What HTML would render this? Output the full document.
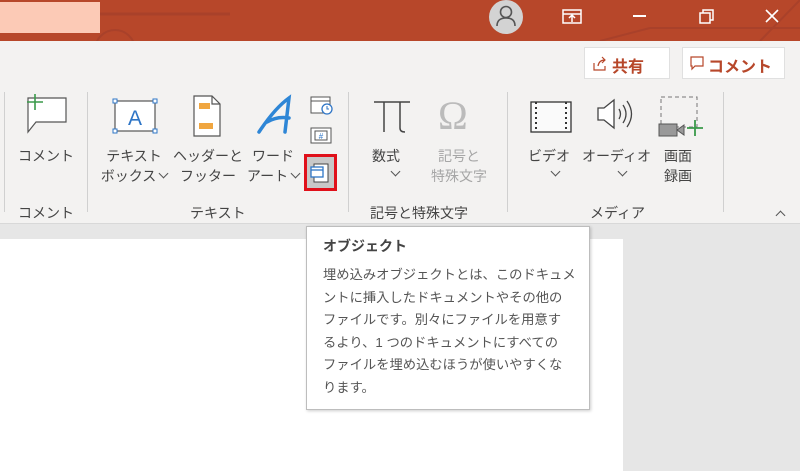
<!DOCTYPE html>
<html><head><meta charset="utf-8"><style>
*{margin:0;padding:0;box-sizing:border-box}
body{width:800px;height:471px;overflow:hidden;background:#e6e6e6;position:relative;font-family:"Liberation Sans","Noto Sans CJK JP",sans-serif;color:#444}
.a{position:absolute}
.t{font-size:14px;color:#444;white-space:nowrap;line-height:20px;text-align:center}
.sep{position:absolute;top:92px;width:1px;height:120px;background:#d0d0d0}
.cv{display:inline-block;width:7px;height:7px;border-right:1.2px solid #555;border-bottom:1.2px solid #555;transform:rotate(45deg);margin:0 0 4px 4px}
</style></head><body>
<div class="a" style="left:0;top:0;width:800px;height:41px;background:#b7472a;overflow:hidden">
<svg width="800" height="41" class="a" style="left:0;top:0">
<line x1="70" y1="14" x2="230" y2="14" stroke="#a9412a" stroke-width="3"/>
<circle cx="115" cy="50" r="20" fill="none" stroke="#a9412a" stroke-width="2"/>
<line x1="600" y1="41" x2="650" y2="28" stroke="#a9412a" stroke-width="2"/>
<line x1="650" y1="28" x2="800" y2="28" stroke="#a9412a" stroke-width="2"/>
<line x1="760" y1="41" x2="800" y2="0" stroke="#a9412a" stroke-width="2"/>
</svg>
<div class="a" style="left:0;top:2px;width:100px;height:31px;background:#fccab6"></div>
<div class="a" style="left:489px;top:0;width:34px;height:34px;border-radius:50%;background:#d3d3d3"></div>
<svg class="a" style="left:489px;top:0" width="34" height="34"><circle cx="17" cy="12" r="5.5" fill="none" stroke="#555" stroke-width="1.6"/><path d="M8 26 Q8 18 17 18 Q26 18 26 26" fill="none" stroke="#555" stroke-width="1.6"/></svg>
<svg class="a" style="left:560px;top:6px" width="24" height="20"><rect x="3" y="4" width="18" height="13" fill="none" stroke="#fff" stroke-width="1.5"/><line x1="3" y1="8" x2="21" y2="8" stroke="#fff" stroke-width="1.5"/><path d="M12 16V10M9 12l3-3 3 3" stroke="#fff" stroke-width="1.5" fill="none"/></svg>
<div class="a" style="left:633px;top:15px;width:13px;height:2px;background:#fff"></div>
<svg class="a" style="left:696px;top:6px" width="20" height="20"><rect x="4" y="7" width="10" height="10" fill="none" stroke="#fff" stroke-width="1.5"/><path d="M7 7V4h10v10h-3" fill="none" stroke="#fff" stroke-width="1.5"/></svg>
<svg class="a" style="left:762px;top:6px" width="20" height="20"><path d="M4 4l12 12M16 4L4 16" stroke="#fff" stroke-width="1.6"/></svg>
</div>
<div class="a" style="left:0;top:41px;width:800px;height:183px;background:#f3f2f1;border-bottom:1px solid #d8d8d8"></div>
<div class="a" style="left:584px;top:47px;width:86px;height:32px;background:#fff;border:1px solid #e0e0e0"></div>
<svg class="a" style="left:592px;top:56px" width="16" height="16"><path d="M2 7v7h11v-4" fill="none" stroke="#b7472a" stroke-width="1.2"/><path d="M6 10Q7 4 13 4M10 1l3 3-3 3" fill="none" stroke="#b7472a" stroke-width="1.2"/></svg>
<div class="a" style="left:612px;top:53px;font-size:16px;font-weight:bold;color:#b7472a">共有</div>
<div class="a" style="left:682px;top:47px;width:103px;height:32px;background:#fff;border:1px solid #e0e0e0"></div>
<svg class="a" style="left:689px;top:55px" width="16" height="16"><path d="M2 2h12v9H6l-3 3v-3H2z" fill="none" stroke="#b7472a" stroke-width="1.2"/></svg>
<div class="a" style="left:708px;top:53px;font-size:16px;font-weight:bold;color:#b7472a">コメント</div>

<div class="sep" style="left:4px"></div>
<div class="sep" style="left:87px"></div>
<div class="sep" style="left:348px"></div>
<div class="sep" style="left:507px"></div>
<div class="sep" style="left:723px"></div>

<svg class="a" style="left:22px;top:92px" width="48" height="42"><path d="M6 6h38v24H14l-8 10V30H6z" fill="#fff" stroke="#555" stroke-width="1.2"/><path d="M13 2v16M5 10h16" stroke="#3a9a4a" stroke-width="1.6"/></svg>
<div class="a t" style="left:18px;top:146px">コメント</div>
<div class="a t" style="left:18px;top:203px">コメント</div>

<svg class="a" style="left:112px;top:98px" width="46" height="38"><rect x="3" y="3" width="40" height="30" fill="#fff" stroke="#555" stroke-width="1.2"/><g fill="#fff" stroke="#2e75c6"><rect x="1" y="1" width="4" height="4"/><rect x="41" y="1" width="4" height="4"/><rect x="1" y="31" width="4" height="4"/><rect x="41" y="31" width="4" height="4"/></g><text x="23" y="27" font-size="21" fill="#2e75c6" text-anchor="middle" font-family="Liberation Sans">A</text></svg>
<div class="a t" style="left:100px;top:146px;width:68px">テキスト<br>ボックス<span class="cv"></span></div>
<svg class="a" style="left:192px;top:94px" width="30" height="44"><path d="M2 2h18l8 8v32H2z" fill="#fff" stroke="#555" stroke-width="1.2"/><path d="M20 2v8h8" fill="none" stroke="#555" stroke-width="1.2"/><rect x="7" y="9" width="11" height="6" fill="#f0a640"/><rect x="7" y="29" width="14" height="6" fill="#f0a640"/></svg>
<div class="a t" style="left:172px;top:146px;width:72px">ヘッダーと<br>フッター</div>
<svg class="a" style="left:255px;top:94px" width="40" height="44"><path d="M4 38Q20 14 34 4L30 38M12 28Q22 22 34 24" fill="none" stroke="#2e86d6" stroke-width="3.5" stroke-linecap="round"/></svg>
<div class="a t" style="left:245px;top:146px;width:56px">ワード<br>アート<span class="cv"></span></div>
<svg class="a" style="left:309px;top:94px" width="26" height="22"><rect x="2" y="3" width="19" height="16" fill="#fff" stroke="#555"/><line x1="2" y1="7" x2="21" y2="7" stroke="#555"/><circle cx="18" cy="15" r="5" fill="#fff" stroke="#2e75c6" stroke-width="1.3"/><path d="M18 12v3h2" stroke="#2e75c6" fill="none"/></svg>
<svg class="a" style="left:309px;top:126px" width="26" height="20"><rect x="2" y="2" width="20" height="15" fill="#fff" stroke="#555"/><rect x="6" y="5" width="12" height="9" fill="none" stroke="#555"/><text x="12" y="13" font-size="8" fill="#2e75c6" text-anchor="middle">#</text></svg>
<div class="a" style="left:304px;top:154px;width:33px;height:37px;border:3px solid #e0101a;background:#c8c8c8"></div>
<svg class="a" style="left:309px;top:161px" width="24" height="24"><rect x="5" y="3" width="14" height="18" fill="#fff" stroke="#444"/><rect x="2" y="6" width="12" height="10" fill="#fff" stroke="#2e75c6" stroke-width="1.3"/><line x1="2" y1="9" x2="14" y2="9" stroke="#2e75c6" stroke-width="1.3"/></svg>
<div class="a t" style="left:190px;top:203px">テキスト</div>

<svg class="a" style="left:372px;top:98px" width="40" height="36"><path d="M2 4h36M12 4v30M28 4v26q0 4 5 4" fill="none" stroke="#444" stroke-width="1.5"/></svg>
<div class="a t" style="left:372px;top:146px">数式</div>
<div class="a" style="left:388px;top:166px"><span class="cv"></span></div>
<div class="a" style="left:438px;top:92px;font-size:40px;color:#bbb;font-family:'Liberation Serif',serif">Ω</div>
<div class="a t" style="left:424px;top:146px;width:70px;color:#a6a6a6">記号と<br>特殊文字</div>
<div class="a t" style="left:370px;top:203px">記号と特殊文字</div>

<svg class="a" style="left:529px;top:100px" width="44" height="34"><rect x="2" y="2" width="40" height="30" fill="#fafafa" stroke="#333" stroke-width="1.3"/><path d="M7 2v30M37 2v30" stroke="#333" stroke-width="2" stroke-dasharray="2 3"/></svg>
<div class="a t" style="left:528px;top:146px">ビデオ</div>
<div class="a" style="left:548px;top:166px"><span class="cv"></span></div>
<svg class="a" style="left:594px;top:96px" width="40" height="36"><path d="M4 12h6l10-8v28l-10-8H4z" fill="#fff" stroke="#444" stroke-width="1.3"/><path d="M25 13q3 5 0 10M29 9q6 9 0 18M33 5q9 13 0 26" fill="none" stroke="#444" stroke-width="1.3"/></svg>
<div class="a t" style="left:582px;top:146px">オーディオ</div>
<div class="a" style="left:615px;top:166px"><span class="cv"></span></div>
<svg class="a" style="left:658px;top:94px" width="48" height="46"><rect x="3" y="3" width="36" height="30" fill="none" stroke="#777" stroke-dasharray="4 3"/><rect x="1" y="30" width="18" height="12" fill="#999" stroke="#555"/><path d="M19 36l7-5v10z" fill="#999" stroke="#555"/><path d="M37 26v16M29 34h16" stroke="#3a9a4a" stroke-width="1.8"/></svg>
<div class="a t" style="left:664px;top:146px">画面<br>録画</div>
<div class="a t" style="left:590px;top:203px">メディア</div>
<div class="a" style="left:777px;top:212px;width:7px;height:7px;border-left:1.2px solid #555;border-top:1.2px solid #555;transform:rotate(45deg)"></div>

<div class="a" style="left:0;top:239px;width:623px;height:232px;background:#fff"></div>
<div class="a" style="left:306px;top:226px;width:284px;height:184px;background:#fff;border:1px solid #bdbdbd;box-shadow:1px 1px 3px rgba(0,0,0,.2)"></div>
<div class="a" style="left:323px;top:236px;font-size:14px;font-weight:bold;color:#444">オブジェクト</div>
<div class="a" style="left:323px;top:264px;width:265px;font-size:13.3px;line-height:22.6px;color:#555;white-space:nowrap">埋め込みオブジェクトとは、このドキュメ<br>ントに挿入したドキュメントやその他の<br>ファイルです。別々にファイルを用意す<br>るより、1 つのドキュメントにすべての<br>ファイルを埋め込むほうが使いやすくな<br>ります。</div>
</body></html>
